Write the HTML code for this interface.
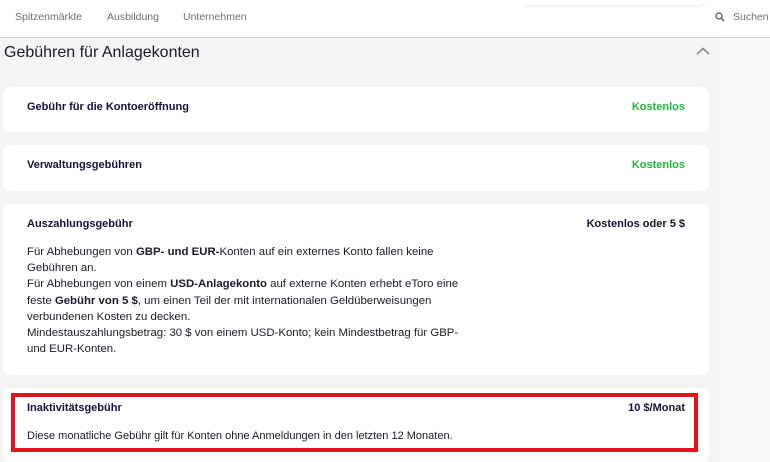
<!DOCTYPE html>
<html><head><meta charset="utf-8"><style>
*{margin:0;padding:0;box-sizing:border-box}
body{width:770px;height:462px;overflow:hidden;background:#f4f4f5;font-family:"Liberation Sans",sans-serif;color:#12123a;position:relative}
.nav{position:absolute;left:0;top:0;width:770px;height:38px;background:#fff;border-bottom:1px solid #d6d6d6}
.nav span{position:absolute;top:11px;font-size:10.5px;color:#6d6d78}
.right{position:absolute;left:720px;top:38px;width:50px;height:424px;background:#f8f8f8}
h1{position:absolute;left:4px;top:44px;font-size:16px;font-weight:normal;color:#1a1a2e}
.card{position:absolute;left:3px;width:706px;background:#fff;border-radius:8px}
.t{position:absolute;left:24px;font-size:11px;font-weight:bold;color:#12123a}
.v{position:absolute;right:24px;font-size:11px;font-weight:bold}
.g{color:#1fb83a}
.p{position:absolute;left:24px;font-size:11.4px;line-height:16.2px;white-space:nowrap;color:#1a1a2e}
.red{position:absolute;left:11px;top:393px;width:687px;height:59px;border:4px solid #e8101b}
</style></head><body>
<div class="nav">
<span style="left:15px">Spitzenmärkte</span>
<span style="left:107px">Ausbildung</span>
<span style="left:183px">Unternehmen</span>
<svg style="position:absolute;left:715px;top:12px" width="10" height="10"><circle cx="4" cy="4" r="3" stroke="#555" stroke-width="1.2" fill="none"/><path d="M6.2 6.2 L9 9" stroke="#555" stroke-width="1.4"/></svg>
<span style="left:733px">Suchen</span>
</div>
<div style="position:absolute;left:522px;top:0;width:182px;height:5px;background:#fff;box-shadow:0 1px 3px rgba(0,0,0,.08);border-radius:0 0 6px 6px"></div>
<div class="right"></div>
<h1>Gebühren für Anlagekonten</h1>
<svg style="position:absolute;left:696px;top:47px" width="14" height="9"><path d="M1 7 L7 1.5 L13 7" stroke="#8a8a8a" stroke-width="1.6" fill="none"/></svg>

<div class="card" style="top:87px;height:45px"><div class="t" style="top:14px">Gebühr für die Kontoeröffnung</div><div class="v g" style="top:14px">Kostenlos</div></div>
<div class="card" style="top:145px;height:46px"><div class="t" style="top:14px">Verwaltungsgebühren</div><div class="v g" style="top:14px">Kostenlos</div></div>
<div class="card" style="top:204px;height:171px"><div class="t" style="top:14px">Auszahlungsgebühr</div><div class="v" style="top:14px">Kostenlos oder 5 $</div>
<div class="p" style="top:40px">Für Abhebungen von <b>GBP- und EUR-</b>Konten auf ein externes Konto fallen keine<br>Gebühren an.<br>Für Abhebungen von einem <b>USD-Anlagekonto</b> auf externe Konten erhebt eToro eine<br>feste <b>Gebühr von 5 $</b>, um einen Teil der mit internationalen Geldüberweisungen<br>verbundenen Kosten zu decken.<br>Mindestauszahlungsbetrag: 30 $ von einem USD-Konto; kein Mindestbetrag für GBP-<br>und EUR-Konten.</div></div>
<div class="card" style="top:388px;height:74px"><div class="t" style="top:14px">Inaktivitätsgebühr</div><div class="v" style="top:14px">10 $/Monat</div>
<div class="p" style="top:40px;font-size:11px">Diese monatliche Gebühr gilt für Konten ohne Anmeldungen in den letzten 12 Monaten.</div></div>
<div class="red"></div>
</body></html>
